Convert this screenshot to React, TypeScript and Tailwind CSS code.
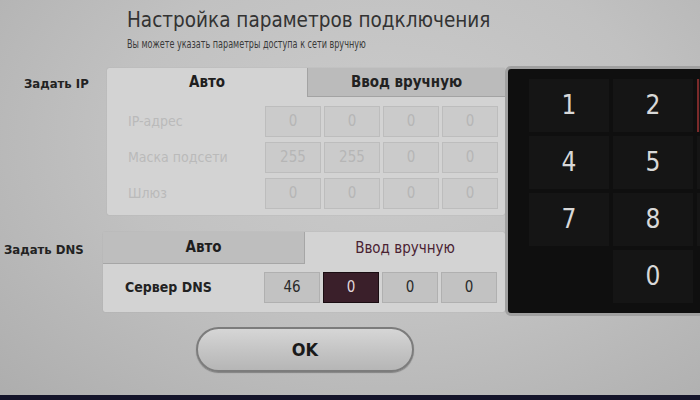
import React from "react";

const font = { fontFamily: '"DejaVu Sans Condensed", "Roboto Condensed", Roboto, "Liberation Sans", sans-serif' };

function Field({ v, variant }: { v: string; variant: "disabled" | "normal" | "active" }) {
  const cls =
    variant === "disabled"
      ? "bg-[#cbcbcb] border-[#bdbdbd] text-[#b6b6b6]"
      : variant === "active"
      ? "bg-[#3a1f2a] border-[#1a0d12] text-[#e0d6da]"
      : "bg-[#c2c2c2] border-[#b0b0b0] text-[#2a2a2a]";
  return (
    <div className={`w-[56px] h-[31px] border flex items-center justify-center text-[15px] ${cls}`}>{v}</div>
  );
}

function Row({ label, values }: { label: string; values: string[] }) {
  return (
    <div className="flex items-center h-[30px]">
      <div className="w-[158px] pl-[21px] text-[14px] text-[#bababa]">{label}</div>
      <div className="flex gap-[3px]">
        {values.map((v, i) => (
          <Field key={i} v={v} variant="disabled" />
        ))}
      </div>
    </div>
  );
}

export default function App() {
  const keys: (string | null)[] = ["1", "2", "", "4", "5", "", "7", "8", "", null, "0", null];
  return (
    <div
      className="w-[700px] h-[400px] overflow-hidden flex flex-col bg-[radial-gradient(ellipse_at_55%_35%,#cbcbcb_0%,#c1c1c1_50%,#adadad_100%)] text-[#1e1e1e]"
      style={font}
    >
      <div className="pl-[127px] pt-[7px] h-[66px]">
        <div className="text-[20.5px] leading-[26px] text-[#333]">Настройка параметров подключения</div>
        <div className="text-[11.5px] leading-[15px] mt-[4px] text-[#3a3a3a] origin-left scale-x-[0.78] whitespace-nowrap">
          Вы можете указать параметры доступа к сети вручную
        </div>
      </div>
      <div className="flex">
        <div className="w-[513px] flex flex-col">
          <div className="flex pt-[2px]">
            <div className="w-[107px] pl-[24px] pt-[6px] text-[13px] font-semibold text-[#222]">Задать IP</div>
            <div className="w-[398px] h-[147px] bg-[#d3d3d3] rounded-[2px] shadow-[0_0_1px_#999] flex flex-col">
              <div className="flex h-[29px]">
                <div className="w-[200px] flex items-center justify-center text-[15px] font-semibold text-[#1e1e1e]">Авто</div>
                <div className="flex-1 bg-[#bbbbbb] border-l border-b border-[#a3a3a3] flex items-center justify-center text-[15px] font-semibold text-[#222]">
                  Ввод вручную
                </div>
              </div>
              <div className="flex flex-col gap-[6px] pt-[9px]">
                <Row label="IP-адрес" values={["0", "0", "0", "0"]} />
                <Row label="Маска подсети" values={["255", "255", "0", "0"]} />
                <Row label="Шлюз" values={["0", "0", "0", "0"]} />
              </div>
            </div>
          </div>
          <div className="flex mt-[17px]">
            <div className="w-[103px] pl-[4px] pt-[8px] text-[13px] font-semibold text-[#222]">Задать DNS</div>
            <div className="w-[402px] h-[80px] bg-[#d3d3d3] rounded-[2px] shadow-[0_0_1px_#999] flex flex-col">
              <div className="flex h-[32px]">
                <div className="w-[202px] bg-[#bebebe] border-r border-b border-[#a6a6a6] flex items-center justify-center text-[15px] font-semibold text-[#1e1e1e]">
                  Авто
                </div>
                <div className="flex-1 flex items-center justify-center text-[15px] text-[#4a2232]">Ввод вручную</div>
              </div>
              <div className="flex items-center pt-[8px]">
                <div className="w-[161px] pl-[22px] text-[14px] font-semibold text-[#222]">Сервер DNS</div>
                <div className="flex gap-[3px]">
                  <Field v="46" variant="normal" />
                  <Field v="0" variant="active" />
                  <Field v="0" variant="normal" />
                  <Field v="0" variant="normal" />
                </div>
              </div>
            </div>
          </div>
        </div>
        <div className="w-[200px] h-[250px] shrink-0 rounded-[6px] border-[3px] border-[#a0a0a0] bg-[#0f0f0f] pt-[10px] pl-[21px] overflow-hidden">
          <div className="grid grid-cols-[80px_80px_80px] gap-[4px] w-[248px]">
            {keys.map((k, i) => (
              <div
                key={i}
                className={`h-[53px] flex items-center justify-center text-[26px] text-[#d8d8d8] ${
                  k === null ? "" : "bg-[#151515]"
                } ${i === 2 ? "border-l-2 border-[#7a2a2a]" : ""}`}
              >
                {k}
              </div>
            ))}
          </div>
        </div>
      </div>
      <div className="mt-[11px] ml-[196px] w-[218px] h-[45px] rounded-full border-2 border-[#7c7c7c] bg-[linear-gradient(#d6d6d6,#c2c2c2_60%,#b6b6b6)] flex items-center justify-center text-[18px] font-semibold text-[#1a1a1a] shadow-[0_1px_1px_rgba(0,0,0,0.3)]">
        OK
      </div>
      <div className="mt-auto h-[5px] bg-[#14142a]" />
    </div>
  );
}
